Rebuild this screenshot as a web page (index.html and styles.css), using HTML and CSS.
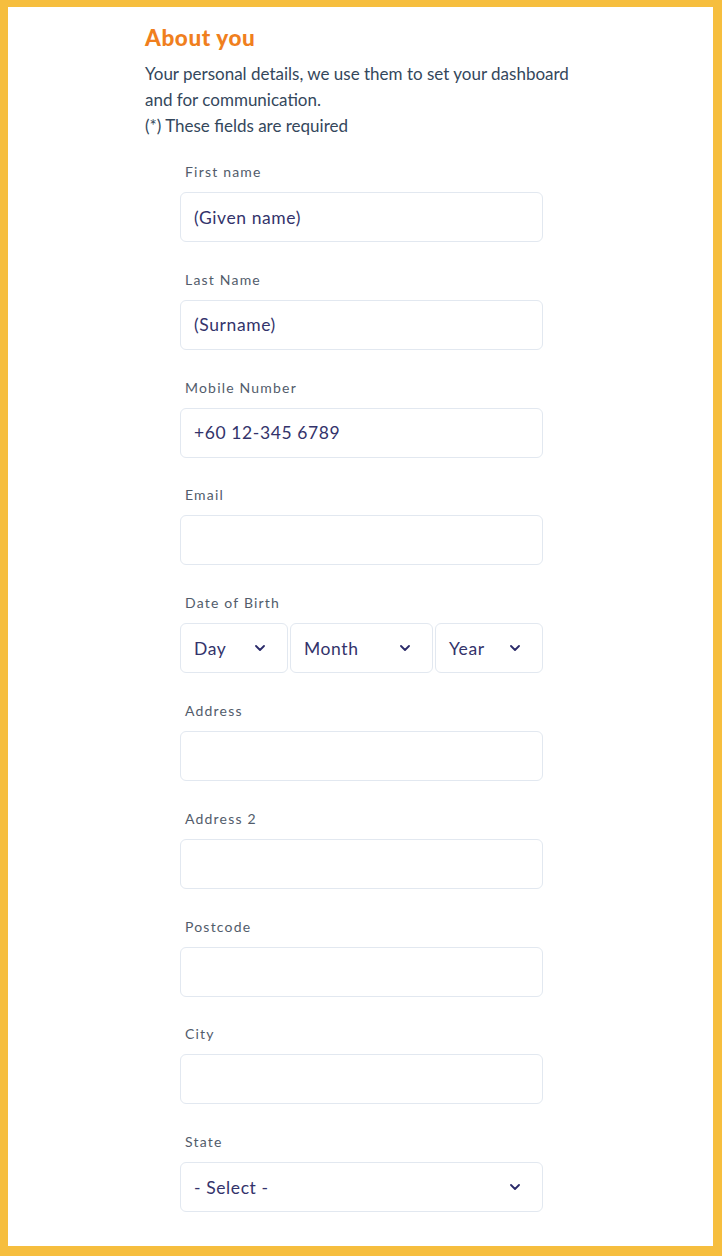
FILE: index.html
```html
<!DOCTYPE html>
<html lang="en">
<head>
    <meta charset="UTF-8">
    <meta name="viewport" content="width=device-width, initial-scale=1.0">
    <title>About you</title>
    <link rel="stylesheet" href="styles.css">
</head>
<body>
    <div class="panel">
        <div class="intro">
            <h2 class="title">About you</h2>
            <p class="lead">Your personal details, we use them to set your dashboard and for communication.<br>(*) These fields are required</p>
        </div>

        <form class="form">
            <div class="field">
                <label class="label">First name</label>
                <div class="input"><span class="value">(Given name)</span></div>
            </div>
            <div class="field">
                <label class="label">Last Name</label>
                <div class="input"><span class="value">(Surname)</span></div>
            </div>
            <div class="field">
                <label class="label">Mobile Number</label>
                <div class="input"><span class="value">+60 12-345 6789</span></div>
            </div>
            <div class="field">
                <label class="label">Email</label>
                <div class="input"></div>
            </div>
            <div class="field">
                <label class="label">Date of Birth</label>
                <div class="dob">
                    <div class="input select"><span class="value">Day</span>
                        <svg class="chevron" viewBox="0 0 10 6"><path d="M1 1l4 4 4-4"/></svg>
                    </div>
                    <div class="input select"><span class="value">Month</span>
                        <svg class="chevron" viewBox="0 0 10 6"><path d="M1 1l4 4 4-4"/></svg>
                    </div>
                    <div class="input select"><span class="value">Year</span>
                        <svg class="chevron" viewBox="0 0 10 6"><path d="M1 1l4 4 4-4"/></svg>
                    </div>
                </div>
            </div>
            <div class="field">
                <label class="label">Address</label>
                <div class="input"></div>
            </div>
            <div class="field">
                <label class="label">Address 2</label>
                <div class="input"></div>
            </div>
            <div class="field">
                <label class="label">Postcode</label>
                <div class="input"></div>
            </div>
            <div class="field">
                <label class="label">City</label>
                <div class="input"></div>
            </div>
            <div class="field">
                <label class="label">State</label>
                <div class="input select"><span class="value">- Select -</span>
                    <svg class="chevron" viewBox="0 0 10 6"><path d="M1 1l4 4 4-4"/></svg>
                </div>
            </div>
        </form>
    </div>
</body>
</html>
```

FILE: styles.css
```css
/* General Styles */
body {
    margin: 0;
    padding: 7px 9px 10px 8px;
    background-color: #f6be3e;
    font-family: Lato, "Open Sans", sans-serif;
}

.panel {
    background-color: #fff;
    min-height: 1239px;
    padding: 18px 0 0 137px;
    box-sizing: border-box;
}

.title {
    margin: 0;
    font-size: 22.5px;
    line-height: 26px;
    font-weight: 900;
    letter-spacing: 0.6px;
    color: #f07f1e;
}

.lead {
    margin: 10px 0 0;
    width: 440px;
    font-size: 17px;
    line-height: 26px;
    color: #34475c;
}

/* Form */
.form {
    margin: 23px 0 0 35px;
    width: 363px;
}

.field {
    margin-bottom: 27.8px;
}

.label {
    display: block;
    padding-left: 5px;
    margin-bottom: 10px;
    font-size: 14px;
    line-height: 20px;
    letter-spacing: 1.2px;
    color: #525c6b;
}

.input {
    height: 50px;
    box-sizing: border-box;
    border: 1px solid #e2e8f0;
    border-radius: 6px;
    padding: 0 13px;
    display: flex;
    align-items: center;
    justify-content: space-between;
}

.value {
    font-size: 17.5px;
    color: #33336b;
    letter-spacing: 0.6px;
}

.chevron {
    width: 10px;
    height: 6px;
    margin-right: 9px;
    fill: none;
    stroke: #2a2a6a;
    stroke-width: 1.8;
    stroke-linecap: round;
    stroke-linejoin: round;
}

.dob {
    display: grid;
    grid-template-columns: 108px 143px 108px;
    gap: 2px;
}
```
